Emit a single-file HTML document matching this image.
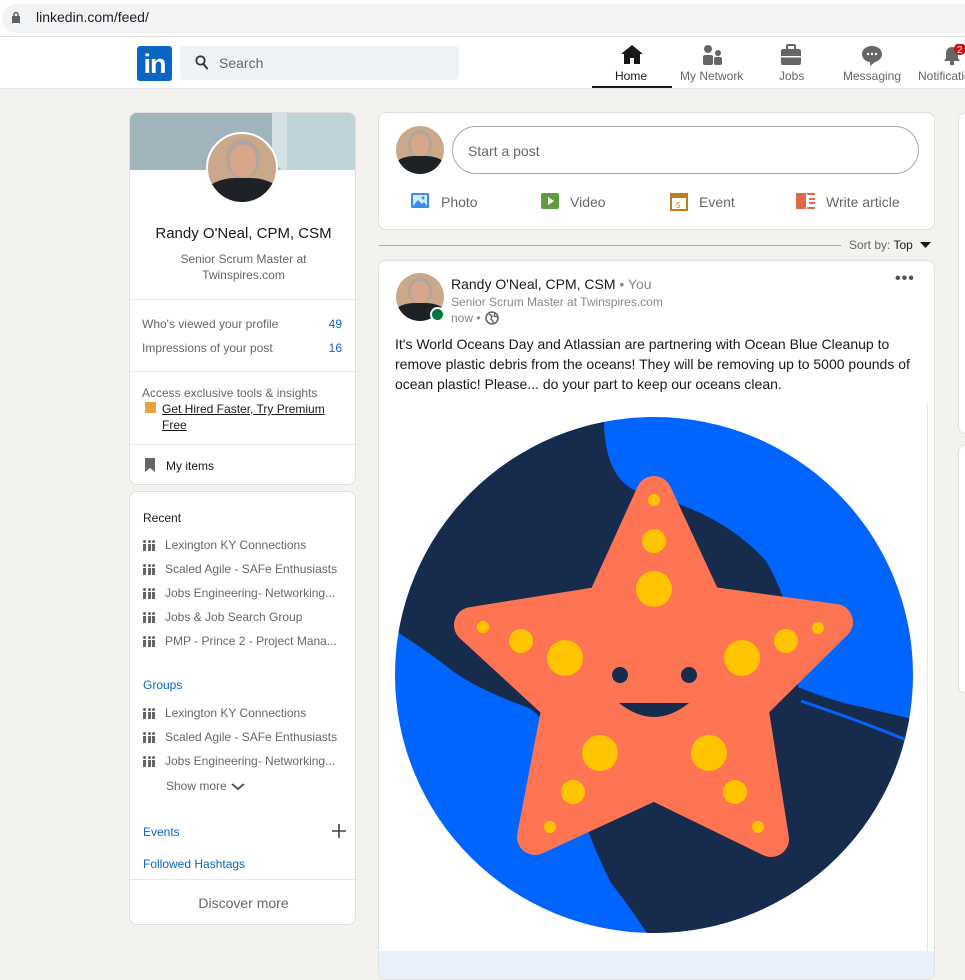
<!DOCTYPE html>
<html><head><meta charset="utf-8"><style>
*{margin:0;padding:0;box-sizing:border-box}
body{width:965px;height:960px;overflow:hidden;background:#f3f2ef;font-family:"Liberation Sans",sans-serif;color:#000;position:relative}
.abs{position:absolute}
.card{position:absolute;background:#fff;border:1px solid #e0dfdc;border-radius:8px;overflow:hidden}
.g{color:#666}
.row{position:absolute;left:13px;font-size:12px;color:#666;display:flex;align-items:center}
.ico{display:inline-block;width:12px;height:11px;margin-right:10px;position:relative}
.ico i{position:absolute;bottom:0;width:3px;background:#666}
.ico b{position:absolute;top:0;width:3px;height:3px;border-radius:50%;background:#666}
.av{position:absolute;border-radius:50%;overflow:hidden;background:#c9a98a}
</style></head><body>
<div class="abs" style="left:0;top:0;width:965px;height:37px;background:#fff"></div>
<div class="abs" style="left:2px;top:4px;width:975px;height:29px;background:#f1f3f4;border-radius:15px"></div>
<svg class="abs" style="left:11px;top:11px" width="10" height="13"><rect x="1" y="5" width="8" height="7" fill="#5f6368"/><path d="M3 5V3.5a2 2 0 014 0V5" stroke="#5f6368" stroke-width="1.5" fill="none"/></svg>
<div class="abs" style="left:36px;top:9px;font-size:14px;color:#202124">linkedin.com/feed/</div>
<div class="abs" style="left:0;top:36px;width:965px;height:1px;background:#dadce0"></div>
<div class="abs" style="left:0;top:37px;width:965px;height:52px;background:#fff;border-bottom:1px solid #e6e6e6"></div>
<div class="abs" style="left:137px;top:46px;width:35px;height:35px;background:#0a66c2;border-radius:3px;color:#fff;font-weight:bold;font-size:27px;line-height:36px;text-align:center;letter-spacing:-1px">in</div>
<div class="abs" style="left:180px;top:46px;width:279px;height:34px;background:#eef3f8;border-radius:4px"></div>
<svg class="abs" style="left:195px;top:55px" width="14" height="15"><circle cx="5.5" cy="5.5" r="4.2" stroke="#333" stroke-width="1.8" fill="none"/><path d="M8.5 9l4 5" stroke="#333" stroke-width="2"/></svg>
<div class="abs g" style="left:219px;top:55px;font-size:14px">Search</div>
<svg class="abs" style="left:620px;top:44px" width="24" height="22"><path d="M12 1L1 10h3v10h6v-6h4v6h6V10h3z" fill="#191919"/></svg>
<div class="abs" style="left:615px;top:69px;font-size:12px;color:#191919">Home</div>
<div class="abs" style="left:592px;top:86px;width:80px;height:2px;background:#191919"></div>
<svg class="abs" style="left:701px;top:44px" width="24" height="22"><circle cx="7" cy="5" r="4" fill="#666"/><rect x="2" y="11" width="10" height="10" rx="2" fill="#666"/><circle cx="17" cy="9" r="3" fill="#666"/><rect x="13" y="13" width="8" height="8" rx="2" fill="#666"/></svg>
<div class="abs g" style="left:680px;top:69px;font-size:12px">My Network</div>
<svg class="abs" style="left:779px;top:44px" width="24" height="22"><rect x="8" y="1" width="8" height="5" rx="1" fill="none" stroke="#666" stroke-width="2"/><rect x="2" y="5" width="20" height="16" rx="2" fill="#666"/><rect x="2" y="12" width="20" height="1.5" fill="#fff"/></svg>
<div class="abs g" style="left:779px;top:69px;font-size:12px">Jobs</div>
<svg class="abs" style="left:860px;top:44px" width="24" height="24"><path d="M12 2C6 2 2 5.5 2 10s4 8 8 8v4l5-4c4-1 7-4 7-8 0-4.5-4-8-10-8z" fill="#666"/><circle cx="8" cy="10" r="1.2" fill="#fff"/><circle cx="12" cy="10" r="1.2" fill="#fff"/><circle cx="16" cy="10" r="1.2" fill="#fff"/></svg>
<div class="abs g" style="left:843px;top:69px;font-size:12px">Messaging</div>
<svg class="abs" style="left:940px;top:44px" width="25" height="24"><path d="M4 17h16l-2-3V9a6 6 0 00-12 0v5z" fill="#666"/><rect x="10" y="17" width="4" height="4" fill="#666"/><circle cx="20" cy="5" r="6" fill="#cc1016"/><text x="17" y="9" font-size="10" fill="#fff" font-family="Liberation Sans">2</text></svg>
<div class="abs g" style="left:918px;top:69px;font-size:12px;white-space:nowrap">Notifications</div>

<div class="card" style="left:129px;top:112px;width:227px;height:373px">
 <div class="abs" style="left:0;top:0;width:227px;height:57px;background:#a0b4bb"></div>
 <div class="abs" style="left:150px;top:0;width:77px;height:57px;background:#bfd3d9"></div>
 <div class="abs" style="left:142px;top:0;width:15px;height:57px;background:#d3e0e4;border-radius:0 0 0 30px"></div>
 <div class="av" style="left:76px;top:19px;width:72px;height:72px;border:2px solid #fff">
  <div class="abs" style="left:18px;top:5px;width:34px;height:40px;border-radius:50%;background:#b3a59a"></div>
  <div class="abs" style="left:22px;top:11px;width:26px;height:32px;border-radius:45%;background:#d8a68a"></div>
  <div class="abs" style="left:-2px;top:44px;width:74px;height:40px;border-radius:40% 40% 0 0;background:#1e2226"></div>
 </div>
 <div class="abs" style="left:0;top:112px;width:227px;text-align:center;font-size:15px;color:#191919">Randy O'Neal, CPM, CSM</div>
 <div class="abs g" style="left:0;top:138px;width:227px;text-align:center;font-size:12px;line-height:16px">Senior Scrum Master at<br>Twinspires.com</div>
 <div class="abs" style="left:0;top:186px;width:227px;height:1px;background:#e6e6e6"></div>
 <div class="abs g" style="left:12px;top:204px;font-size:12px">Who's viewed your profile</div>
 <div class="abs" style="right:13px;top:204px;font-size:12px;color:#0a66c2">49</div>
 <div class="abs g" style="left:12px;top:228px;font-size:12px">Impressions of your post</div>
 <div class="abs" style="right:13px;top:228px;font-size:12px;color:#0a66c2">16</div>
 <div class="abs" style="left:0;top:258px;width:227px;height:1px;background:#e6e6e6"></div>
 <div class="abs g" style="left:12px;top:273px;font-size:12px">Access exclusive tools &amp; insights</div>
 <div class="abs" style="left:15px;top:289px;width:11px;height:11px;background:#e7a33e"></div>
 <div class="abs" style="left:32px;top:288px;font-size:12px;line-height:16px;color:#191919;text-decoration:underline">Get Hired Faster, Try Premium<br>Free</div>
 <div class="abs" style="left:0;top:331px;width:227px;height:1px;background:#e6e6e6"></div>
 <svg class="abs" style="left:15px;top:345px" width="10" height="14"><path d="M0 0h10v14l-5-4-5 4z" fill="#666"/></svg>
 <div class="abs" style="left:36px;top:346px;font-size:12px;color:#191919">My items</div>
</div>

<div class="card" style="left:129px;top:491px;width:227px;height:434px">
 <div class="abs" style="left:13px;top:19px;font-size:12px;color:#191919">Recent</div>
 <div class="row" style="top:46px"><span class="ico"><b style="left:0"></b><b style="left:4.5px"></b><b style="left:9px"></b><i style="left:0;height:7px"></i><i style="left:4.5px;height:7px"></i><i style="left:9px;height:7px"></i></span>Lexington KY Connections</div>
 <div class="row" style="top:70px"><span class="ico"><b style="left:0"></b><b style="left:4.5px"></b><b style="left:9px"></b><i style="left:0;height:7px"></i><i style="left:4.5px;height:7px"></i><i style="left:9px;height:7px"></i></span>Scaled Agile - SAFe Enthusiasts</div>
 <div class="row" style="top:94px"><span class="ico"><b style="left:0"></b><b style="left:4.5px"></b><b style="left:9px"></b><i style="left:0;height:7px"></i><i style="left:4.5px;height:7px"></i><i style="left:9px;height:7px"></i></span>Jobs Engineering- Networking...</div>
 <div class="row" style="top:118px"><span class="ico"><b style="left:0"></b><b style="left:4.5px"></b><b style="left:9px"></b><i style="left:0;height:7px"></i><i style="left:4.5px;height:7px"></i><i style="left:9px;height:7px"></i></span>Jobs &amp; Job Search Group</div>
 <div class="row" style="top:142px"><span class="ico"><b style="left:0"></b><b style="left:4.5px"></b><b style="left:9px"></b><i style="left:0;height:7px"></i><i style="left:4.5px;height:7px"></i><i style="left:9px;height:7px"></i></span>PMP - Prince 2 - Project Mana...</div>
 <div class="abs" style="left:13px;top:186px;font-size:12px;color:#0a66c2">Groups</div>
 <div class="row" style="top:214px"><span class="ico"><b style="left:0"></b><b style="left:4.5px"></b><b style="left:9px"></b><i style="left:0;height:7px"></i><i style="left:4.5px;height:7px"></i><i style="left:9px;height:7px"></i></span>Lexington KY Connections</div>
 <div class="row" style="top:238px"><span class="ico"><b style="left:0"></b><b style="left:4.5px"></b><b style="left:9px"></b><i style="left:0;height:7px"></i><i style="left:4.5px;height:7px"></i><i style="left:9px;height:7px"></i></span>Scaled Agile - SAFe Enthusiasts</div>
 <div class="row" style="top:262px"><span class="ico"><b style="left:0"></b><b style="left:4.5px"></b><b style="left:9px"></b><i style="left:0;height:7px"></i><i style="left:4.5px;height:7px"></i><i style="left:9px;height:7px"></i></span>Jobs Engineering- Networking...</div>
 <div class="abs g" style="left:36px;top:287px;font-size:12px">Show more</div>
 <svg class="abs" style="left:101px;top:291px" width="14" height="8"><path d="M1 1l6 5 6-5" stroke="#555" stroke-width="2" fill="none"/></svg>
 <div class="abs" style="left:13px;top:333px;font-size:12px;color:#0a66c2">Events</div>
 <svg class="abs" style="left:202px;top:332px" width="14" height="14"><path d="M7 0v14M0 7h14" stroke="#444" stroke-width="1.6"/></svg>
 <div class="abs" style="left:13px;top:365px;font-size:12px;color:#0a66c2">Followed Hashtags</div>
 <div class="abs" style="left:0;top:387px;width:227px;height:1px;background:#e6e6e6"></div>
 <div class="abs g" style="left:0;top:403px;width:227px;text-align:center;font-size:14px">Discover more</div>
</div>

<div class="card" style="left:378px;top:112px;width:557px;height:118px">
 <div class="av" style="left:17px;top:13px;width:48px;height:48px">
  <div class="abs" style="left:12px;top:4px;width:24px;height:28px;border-radius:50%;background:#b3a59a"></div>
  <div class="abs" style="left:15px;top:8px;width:18px;height:22px;border-radius:45%;background:#d8a68a"></div>
  <div class="abs" style="left:0;top:30px;width:48px;height:20px;border-radius:40% 40% 0 0;background:#1e2226"></div>
 </div>
 <div class="abs" style="left:73px;top:13px;width:467px;height:48px;border:1px solid #a8a8a8;border-radius:24px"></div>
 <div class="abs g" style="left:89px;top:30px;font-size:14px">Start a post</div>
 <svg class="abs" style="left:31px;top:79px" width="20" height="17"><rect x="1" y="1" width="18" height="15" rx="1" fill="#378fe9"/><rect x="3" y="3" width="14" height="11" fill="#d5e7f9"/><path d="M3 14l5-6 4 4 2-2 3 4z" fill="#378fe9"/><circle cx="13" cy="6" r="1.5" fill="#378fe9"/></svg>
 <div class="abs g" style="left:62px;top:81px;font-size:14px">Photo</div>
 <svg class="abs" style="left:161px;top:79px" width="20" height="18"><rect x="1" y="1" width="18" height="16" rx="2" fill="#5f9b41"/><path d="M8 5l6 4-6 4z" fill="#fff"/></svg>
 <div class="abs g" style="left:191px;top:81px;font-size:14px">Video</div>
 <svg class="abs" style="left:291px;top:78px" width="18" height="20"><rect x="1" y="3" width="16" height="16" fill="#fff" stroke="#c37d16" stroke-width="2"/><rect x="1" y="3" width="16" height="4" fill="#c37d16"/><text x="6" y="17" font-size="8" fill="#c37d16" font-family="Liberation Sans">5</text></svg>
 <div class="abs g" style="left:320px;top:81px;font-size:14px">Event</div>
 <svg class="abs" style="left:417px;top:80px" width="20" height="16"><rect x="0" y="0" width="10" height="16" fill="#e06847"/><rect x="11" y="0" width="8" height="2" fill="#e06847"/><rect x="13" y="5" width="6" height="2" fill="#e06847"/><rect x="13" y="9" width="6" height="2" fill="#e06847"/><rect x="11" y="14" width="8" height="2" fill="#e06847"/></svg>
 <div class="abs g" style="left:447px;top:81px;font-size:14px">Write article</div>
</div>

<div class="abs" style="left:379px;top:245px;width:462px;height:1px;background:#aaa"></div>
<div class="abs g" style="left:849px;top:238px;font-size:12px">Sort by: <span style="color:#191919">Top</span></div>
<svg class="abs" style="left:920px;top:242px" width="11" height="7"><path d="M0 0h11L5.5 6z" fill="#191919"/></svg>

<div class="card" style="left:378px;top:260px;width:557px;height:720px">
 <div class="av" style="left:17px;top:12px;width:48px;height:48px">
  <div class="abs" style="left:12px;top:4px;width:24px;height:28px;border-radius:50%;background:#b3a59a"></div>
  <div class="abs" style="left:15px;top:8px;width:18px;height:22px;border-radius:45%;background:#d8a68a"></div>
  <div class="abs" style="left:0;top:30px;width:48px;height:20px;border-radius:40% 40% 0 0;background:#1e2226"></div>
 </div>
 <div class="abs" style="left:51px;top:46px;width:15px;height:15px;border-radius:50%;background:#057642;border:2px solid #fff"></div>
 <div class="abs" style="left:72px;top:15px;font-size:14px;color:#191919">Randy O'Neal, CPM, CSM <span style="color:#888">• You</span></div>
 <div class="abs" style="left:72px;top:34px;font-size:12px;color:#888">Senior Scrum Master at Twinspires.com</div>
 <div class="abs" style="left:72px;top:50px;font-size:12px;color:#888">now •</div>
 <svg class="abs" style="left:106px;top:50px" width="14" height="14"><circle cx="7" cy="7" r="6" fill="none" stroke="#666" stroke-width="1.6"/><path d="M4 3l3 2-1 3 2 2v3M10 2l-1 3 3 1" stroke="#666" stroke-width="1.4" fill="none"/></svg>
 <div class="abs" style="left:516px;top:9px;font-size:16px;color:#555;letter-spacing:1px;font-weight:bold">•••</div>
 <div class="abs" style="left:16px;top:73px;width:530px;font-size:14px;line-height:20px;color:#191919">It's World Oceans Day and Atlassian are partnering with Ocean Blue Cleanup to remove plastic debris from the oceans! They will be removing up to 5000 pounds of ocean plastic! Please... do your part to keep our oceans clean.</div>
 <div class="abs" style="left:548px;top:142px;width:1px;height:550px;background:#e6e6e6"></div>
 <div class="abs" style="left:0;top:690px;width:557px;height:30px;background:#e8f1fb"></div>
 <svg class="abs" style="left:0;top:142px" width="557" height="548" viewBox="378 402 557 548">
  <defs><clipPath id="c"><ellipse cx="653" cy="674" rx="259" ry="258"/></clipPath></defs>
  <g clip-path="url(#c)">
   <rect x="390" y="410" width="530" height="530" fill="#0065ff"/>
   <path d="M380 400 L603 400 L603 421 Q604 480 640 492 Q720 510 765 560 Q795 610 797 686 Q830 700 865 707 L940 725 L940 960 L663 960 Q640 920 610 882 Q588 839 570 780 Q550 720 528 707 Q480 690 453 671 Q420 645 380 621 Z" fill="#172b4d"/>
   <path d="M385 635 Q430 670 470 690 Q520 712 540 740" stroke="#0065ff" stroke-width="3" fill="none"/>
   <path d="M790 510 Q830 560 840 650" stroke="#0065ff" stroke-width="3" fill="none"/>
   <path d="M800 700 Q860 720 920 745" stroke="#0065ff" stroke-width="3" fill="none"/>
  </g>
  <path d="M653 493 L603 603 L471 624 L559 705 L534 836 L653 781 L770 838 L749 705 L834 621 L704 603 Z" fill="#ff7452" stroke="#ff7452" stroke-width="36" stroke-linejoin="round"/>
  <g fill="#ffc400">
   <circle cx="653" cy="499" r="6"/><circle cx="653" cy="540" r="12"/><circle cx="653" cy="588" r="18"/>
   <circle cx="482" cy="626" r="6"/><circle cx="520" cy="640" r="12"/><circle cx="564" cy="657" r="18"/>
   <circle cx="817" cy="627" r="6"/><circle cx="785" cy="640" r="12"/><circle cx="741" cy="657" r="18"/>
   <circle cx="599" cy="752" r="18"/><circle cx="572" cy="791" r="12"/><circle cx="549" cy="826" r="6"/>
   <circle cx="708" cy="752" r="18"/><circle cx="734" cy="791" r="12"/><circle cx="757" cy="826" r="6"/>
  </g>
  <circle cx="619" cy="674" r="8" fill="#172b4d"/><circle cx="688" cy="674" r="8" fill="#172b4d"/>
  <path d="M618 702 Q653 730 688 702 Z" fill="#172b4d"/>
 </svg>
</div>

<div class="card" style="left:958px;top:112px;width:30px;height:322px"></div>
<div class="card" style="left:958px;top:444px;width:30px;height:250px"></div>
</body></html>
